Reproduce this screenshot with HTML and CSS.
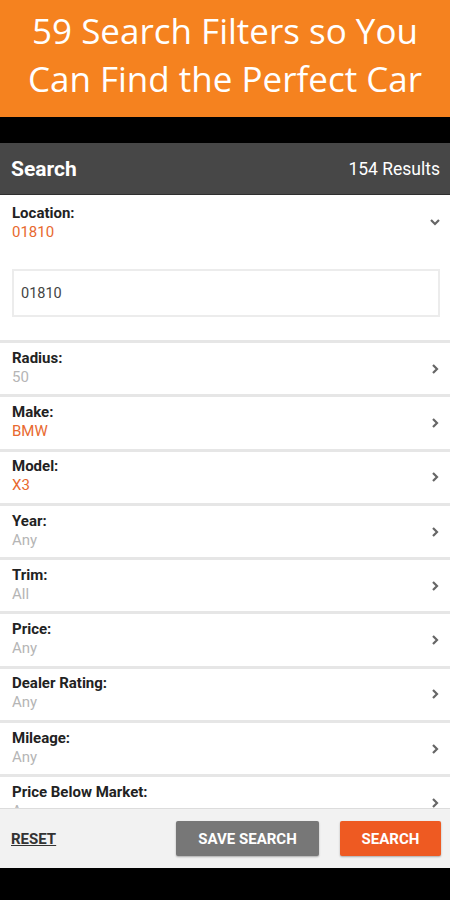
FILE: index.html
```html
<!DOCTYPE html>
<html>
<head>
    <title>Search Filters</title>
    <link rel="stylesheet" href="styles.css">
</head>
<body>

    <div class="banner">
        <p>59 Search Filters so You</p>
        <p>Can Find the Perfect Car</p>
    </div>
    <div class="blackbar"></div>

    <div class="topbar">
        <span class="title">Search</span>
        <span class="count">154 Results</span>
    </div>

    <div class="filters">
        <div class="location">
            <div class="row-head">
                <div>
                    <p class="label">Location:</p>
                    <p class="value orange">01810</p>
                </div>
                <svg class="chev" width="14" height="14" viewBox="0 0 14 14"><path d="M3 5 L7 9 L11 5" fill="none" stroke="#666" stroke-width="2.2"/></svg>
            </div>
            <div class="zipbox">01810</div>
        </div>

        <div class="row">
            <div><p class="label">Radius:</p><p class="value">50</p></div>
            <svg class="chev" width="14" height="14" viewBox="0 0 14 14"><path d="M5 3 L9 7 L5 11" fill="none" stroke="#666" stroke-width="2.2"/></svg>
        </div>
        <div class="row">
            <div><p class="label">Make:</p><p class="value orange">BMW</p></div>
            <svg class="chev" width="14" height="14" viewBox="0 0 14 14"><path d="M5 3 L9 7 L5 11" fill="none" stroke="#666" stroke-width="2.2"/></svg>
        </div>
        <div class="row">
            <div><p class="label">Model:</p><p class="value orange">X3</p></div>
            <svg class="chev" width="14" height="14" viewBox="0 0 14 14"><path d="M5 3 L9 7 L5 11" fill="none" stroke="#666" stroke-width="2.2"/></svg>
        </div>
        <div class="row">
            <div><p class="label">Year:</p><p class="value">Any</p></div>
            <svg class="chev" width="14" height="14" viewBox="0 0 14 14"><path d="M5 3 L9 7 L5 11" fill="none" stroke="#666" stroke-width="2.2"/></svg>
        </div>
        <div class="row">
            <div><p class="label">Trim:</p><p class="value">All</p></div>
            <svg class="chev" width="14" height="14" viewBox="0 0 14 14"><path d="M5 3 L9 7 L5 11" fill="none" stroke="#666" stroke-width="2.2"/></svg>
        </div>
        <div class="row">
            <div><p class="label">Price:</p><p class="value">Any</p></div>
            <svg class="chev" width="14" height="14" viewBox="0 0 14 14"><path d="M5 3 L9 7 L5 11" fill="none" stroke="#666" stroke-width="2.2"/></svg>
        </div>
        <div class="row">
            <div><p class="label">Dealer Rating:</p><p class="value">Any</p></div>
            <svg class="chev" width="14" height="14" viewBox="0 0 14 14"><path d="M5 3 L9 7 L5 11" fill="none" stroke="#666" stroke-width="2.2"/></svg>
        </div>
        <div class="row">
            <div><p class="label">Mileage:</p><p class="value">Any</p></div>
            <svg class="chev" width="14" height="14" viewBox="0 0 14 14"><path d="M5 3 L9 7 L5 11" fill="none" stroke="#666" stroke-width="2.2"/></svg>
        </div>
        <div class="row">
            <div><p class="label">Price Below Market:</p><p class="value">Any</p></div>
            <svg class="chev" width="14" height="14" viewBox="0 0 14 14"><path d="M5 3 L9 7 L5 11" fill="none" stroke="#666" stroke-width="2.2"/></svg>
        </div>
    </div>

    <div class="actions">
        <span class="reset">RESET</span>
        <div class="btns">
            <button class="save">SAVE SEARCH</button>
            <button class="go">SEARCH</button>
        </div>
    </div>
    <div class="navbar"></div>

</body>
</html>
```

FILE: styles.css
```css
body {
    margin: 0;
    padding: 0;
    width: 450px;
    font-family: Roboto, "Liberation Sans", sans-serif;
    background-color: #000;
}

p {
    margin: 0;
}

.banner {
    height: 117px;
    background-color: #f5821f;
    color: #fff;
    text-align: center;
    font-family: "Open Sans", sans-serif;
    font-size: 35px;
    line-height: 48px;
    padding-top: 7px;
    box-sizing: border-box;
    white-space: nowrap;
}

.blackbar {
    height: 26px;
}

.topbar {
    height: 52px;
    background-color: #474747;
    color: #fff;
    display: flex;
    justify-content: space-between;
    align-items: center;
    padding: 0 10px 0 11px;
    border-bottom: 1px solid #2e2e2e;
    box-sizing: border-box;
}

.title {
    font-size: 21px;
    font-weight: bold;
}

.count {
    font-size: 17.5px;
}

.filters {
    height: 613px;
    overflow: hidden;
    background-color: #fff;
}

.location {
    height: 148px;
    border-bottom: 3px solid #e6e6e6;
    box-sizing: border-box;
}

.row-head {
    display: flex;
    justify-content: space-between;
    padding: 9px 8px 0 12px;
}

.row-head .chev {
    margin-top: 11px;
}

.zipbox {
    margin: 27px 10px 0 12px;
    height: 48px;
    border: 2px solid #ececec;
    box-sizing: border-box;
    padding-left: 7px;
    display: flex;
    align-items: center;
    font-size: 14.5px;
    color: #444;
}

.row {
    height: 54.3px;
    border-bottom: 3px solid #e6e6e6;
    box-sizing: border-box;
    display: flex;
    justify-content: space-between;
    align-items: center;
    padding: 0 8px 0 12px;
}

.row > div {
    margin-top: -2px;
}

.label {
    font-size: 15px;
    font-weight: bold;
    color: #222;
    line-height: 19px;
}

.value {
    font-size: 15px;
    color: #b5b5b5;
    line-height: 19px;
}

.orange {
    color: #e8692f;
}

.actions {
    height: 60px;
    background-color: #f2f2f2;
    border-top: 1px solid #dcdcdc;
    box-sizing: border-box;
    display: flex;
    justify-content: space-between;
    align-items: center;
    padding: 0 9px 0 11px;
}

.reset {
    font-size: 15px;
    font-weight: bold;
    color: #333;
    text-decoration: underline;
}

.btns {
    display: flex;
    gap: 21px;
}

.btns button {
    height: 35px;
    border: none;
    border-radius: 2px;
    color: #fff;
    font-family: Roboto, sans-serif;
    font-size: 15px;
    font-weight: bold;
    box-shadow: 0 1px 2px rgba(0, 0, 0, 0.3);
}

.save {
    width: 143px;
    background-color: #777;
}

.go {
    width: 101px;
    background-color: #ee5a22;
}

.navbar {
    height: 32px;
}
```
